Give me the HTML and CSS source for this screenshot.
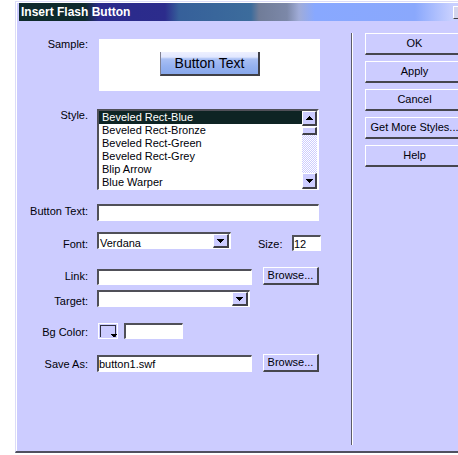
FILE: index.html
```html
<!DOCTYPE html>
<html>
<head>
<meta charset="utf-8">
<title>Insert Flash Button</title>
<link rel="stylesheet" href="styles.css">
</head>
<body>
<div class="dialog">
  <div class="frame">
    <div class="titlebar">
      <span class="title">Insert Flash Button</span>
      <span class="close"></span>
    </div>
    <div class="content">
      <div class="form">
        <div class="row row-sample">
          <span class="lbl">Sample:</span>
          <div class="sample-box"><div class="sample-btn">Button Text</div></div>
        </div>

        <div class="row row-style">
          <span class="lbl">Style.</span>
          <div class="listbox">
            <ul class="items">
              <li class="sel">Beveled Rect-Blue</li>
              <li>Beveled Rect-Bronze</li>
              <li>Beveled Rect-Green</li>
              <li>Beveled Rect-Grey</li>
              <li>Blip Arrow</li>
              <li>Blue Warper</li>
            </ul>
            <div class="vscroll">
              <div class="sb-btn sb-up"><svg width="7" height="4" viewBox="0 0 7 4" shape-rendering="crispEdges"><path d="M3.5 0L7 4H0z" fill="#000"/></svg></div>
              <div class="thumb"></div>
              <div class="track"></div>
              <div class="sb-btn sb-down"><svg width="7" height="4" viewBox="0 0 7 4" shape-rendering="crispEdges"><path d="M0 0H7L3.5 4z" fill="#000"/></svg></div>
            </div>
          </div>
        </div>

        <div class="row row-btntext">
          <span class="lbl">Button Text:</span>
          <div class="field field-wide"></div>
        </div>

        <div class="row row-font">
          <span class="lbl">Font:</span>
          <div class="select select-font">
            <span class="select-text">Verdana</span>
            <span class="drop"><svg width="7" height="4" viewBox="0 0 7 4" shape-rendering="crispEdges"><path d="M0 0H7L3.5 4z" fill="#000"/></svg></span>
          </div>
          <span class="size-lbl">Size:</span>
          <div class="field field-size"><span class="field-text">12</span></div>
        </div>

        <div class="row row-link">
          <span class="lbl">Link:</span>
          <div class="field field-link"></div>
          <div class="btn btn-browse">Browse...</div>
        </div>

        <div class="row row-target">
          <span class="lbl">Target:</span>
          <div class="select select-target">
            <span class="select-text"></span>
            <span class="drop"><svg width="7" height="4" viewBox="0 0 7 4" shape-rendering="crispEdges"><path d="M0 0H7L3.5 4z" fill="#000"/></svg></span>
          </div>
        </div>

        <div class="row row-bg">
          <span class="lbl">Bg Color:</span>
          <span class="swatch">
            <svg width="20" height="16" viewBox="0 0 20 16" shape-rendering="crispEdges">
              <rect x="0" y="0" width="20" height="16" fill="#ccccff"/>
              <rect x="0.5" y="0.5" width="19" height="15" fill="none" stroke="#ffffff"/>
              <path d="M2.5 14V2.5H17.5V14" fill="none" stroke="#303040"/>
              <path d="M12 11H19L15.5 14.5z" fill="#000"/>
            </svg>
          </span>
          <div class="field field-color"></div>
        </div>

        <div class="row row-save">
          <span class="lbl">Save As:</span>
          <div class="field field-save"><span class="field-text">button1.swf</span></div>
          <div class="btn btn-browse">Browse...</div>
        </div>
      </div>

      <div class="sep"></div>

      <div class="buttons">
        <div class="btn btn-side">OK</div>
        <div class="btn btn-side">Apply</div>
        <div class="btn btn-side">Cancel</div>
        <div class="btn btn-side">Get More Styles...</div>
        <div class="btn btn-side">Help</div>
      </div>
    </div>
  </div>
</div>
</body>
</html>
```

FILE: styles.css
```css
html, body {
  margin: 0;
  padding: 0;
  background: #ffffff;
  overflow: hidden;
}

body {
  width: 458px;
  height: 455px;
  font-family: "Liberation Sans", Arial, sans-serif;
  font-size: 11px;
  color: #000008;
}

.dialog {
  margin: 1px 0 0 15px;
  width: 459px;
  border-top: 1px solid #dcdcf8;
  border-left: 1px solid #dcdcf8;
  border-bottom: 2px solid #505060;
  background: #ccccff;
}

.frame {
  border-top: 1px solid #ffffff;
  border-left: 1px solid #ffffff;
  padding: 0 2px;
  height: 448px;
  display: flex;
  flex-direction: column;
}

.titlebar {
  height: 18px;
  flex: none;
  display: flex;
  align-items: center;
  background: linear-gradient(to right,
    #0e2a2c 0px, #0e2a2c 66px,
    #2a2a8c 80px, #2c2c8c 146px,
    #36609a 160px, #3c6c9c 232px,
    #707c98 240px, #7c88a8 268px,
    #a0acd8 280px, #88a8ff 296px,
    #8aa8fc 396px, #c8d0ff 433px, #ccccff 454px);
}

.title {
  padding-left: 2px;
  font-weight: bold;
  font-size: 12px;
  line-height: 18px;
  color: #ffffff;
}

.close {
  margin-left: auto;
  margin-right: 4px;
  width: 16px;
  height: 13px;
  box-sizing: border-box;
  background: #d4d4ec;
  border-top: 1px solid #ffffff;
  border-left: 1px solid #ffffff;
  border-bottom: 1px solid #404048;
}

.content {
  flex: 1;
  display: flex;
}

.form {
  width: 332px;
  flex: none;
  padding-top: 18px;
  box-sizing: border-box;
  display: flex;
  flex-direction: column;
}

.row {
  display: flex;
  align-items: flex-start;
}

.lbl {
  width: 69px;
  flex: none;
  margin-right: 9px;
  text-align: right;
  line-height: 13px;
  white-space: nowrap;
}

/* row spacing */
.row-style { margin-top: 18px; }
.row-btntext { margin-top: 14px; }
.row-font { margin-top: 11px; }
.row-link { margin-top: 16px; }
.row-target { margin-top: 5px; }
.row-bg { margin-top: 15px; }
.row-save { margin-top: 15px; }

/* label vertical offsets */
.row-sample .lbl { margin-top: -1px; }
.row-btntext .lbl { margin-top: 1px; }
.row-font .lbl { margin-top: 6px; }
.row-link .lbl { margin-top: 3px; }
.row-target .lbl { margin-top: 5px; }
.row-bg .lbl { margin-top: 3px; }
.row-save .lbl { margin-top: 4px; }

/* sample */
.sample-box {
  margin-left: 2px;
  width: 221px;
  height: 52px;
  background: #ffffff;
  display: flex;
  align-items: center;
  justify-content: center;
}

.sample-btn {
  width: 100px;
  height: 24px;
  box-sizing: border-box;
  margin-left: 1px;
  margin-top: -2px;
  background: linear-gradient(to bottom, #eef0ff 0px, #e2e8ff 5px, #aac0f4 7px, #96b2f0 14px, #88a8ec 22px);
  border-left: 1px solid #808090;
  border-right: 2px solid #404048;
  border-bottom: 2px solid #404048;
  font-size: 14px;
  line-height: 22px;
  text-align: center;
  color: #000008;
}

/* list */
.listbox {
  width: 222px;
  height: 81px;
  box-sizing: border-box;
  border-style: solid;
  border-width: 2px 2px 1px 2px;
  border-color: #505058 #ffffff #ffffff #505058;
  background: #ffffff;
  display: flex;
}

.items {
  flex: 1;
  list-style: none;
  margin: 0;
  padding: 0;
}

.items li {
  height: 13px;
  line-height: 13px;
  padding-left: 3px;
  white-space: nowrap;
  color: #000008;
}

.items li.sel {
  background: #0e2424;
  color: #ffffff;
}

.vscroll {
  width: 15px;
  flex: none;
  display: flex;
  flex-direction: column;
}

.sb-btn {
  box-sizing: border-box;
  background: #ccccff;
  border-top: 1px solid #ffffff;
  border-left: 1px solid #ffffff;
  border-right: 2px solid #404048;
  border-bottom: 2px solid #404048;
  display: flex;
  align-items: center;
  justify-content: center;
}

.sb-up { height: 15px; }
.sb-down { height: 16px; }

.thumb {
  margin-top: 1px;
  height: 8px;
  box-sizing: border-box;
  background: #ccccff;
  border-top: 1px solid #ffffff;
  border-left: 1px solid #ffffff;
  border-right: 2px solid #404048;
  border-bottom: 2px solid #404048;
}

.track {
  flex: 1;
  background: repeating-conic-gradient(#ffffff 0 25%, #ccccff 0 50%) 0 0 / 2px 2px;
}

/* fields */
.field {
  box-sizing: border-box;
  height: 17px;
  background: #ffffff;
  border-style: solid;
  border-width: 2px 1px 1px 2px;
  border-color: #505058 #ffffff #ffffff #505058;
  overflow: visible;
}

.field-text {
  display: block;
  line-height: 13px;
  padding-top: 1px;
  color: #000008;
  white-space: nowrap;
}

.field-wide { width: 222px; }
.field-link { width: 155px; height: 16px; margin-top: 2px; }
.field-size { width: 29px; height: 16px; margin-top: 3px; }
.field-color { width: 59px; height: 16px; margin-left: 6px; }
.field-save { width: 155px; margin-top: 1px; }

.select {
  box-sizing: border-box;
  height: 17px;
  background: #ffffff;
  border-style: solid;
  border-width: 2px 1px 1px 2px;
  border-color: #505058 #ffffff #ffffff #505058;
  display: flex;
  align-items: flex-start;
}

.select-font { width: 134px; }
.select-target { width: 153px; }

.select-text {
  padding-left: 1px;
  padding-top: 3px;
  line-height: 13px;
  color: #000008;
  white-space: nowrap;
}

.drop {
  margin-left: auto;
  margin-right: 1px;
  width: 16px;
  height: 14px;
  box-sizing: border-box;
  background: #ccccff;
  border-top: 1px solid #ffffff;
  border-left: 1px solid #ffffff;
  border-right: 2px solid #404048;
  border-bottom: 2px solid #404048;
  display: flex;
  align-items: center;
  justify-content: center;
}

.size-lbl {
  margin-left: 27px;
  margin-top: 6px;
  width: 34px;
  line-height: 13px;
}

.swatch {
  margin-left: 1px;
  width: 20px;
  height: 16px;
  display: block;
}

.swatch svg { display: block; }

/* buttons */
.btn {
  box-sizing: border-box;
  background: #ccccff;
  border-top: 1px solid #ffffff;
  border-left: 1px solid #ffffff;
  border-right: 2px solid #46464e;
  border-bottom: 2px solid #46464e;
  text-align: center;
  color: #000008;
  white-space: nowrap;
}

.btn-browse {
  margin-left: 11px;
  width: 56px;
  height: 18px;
  line-height: 15px;
}

.sep {
  width: 1px;
  flex: none;
  margin: 12px 0 6px 0;
  background: #5c5c68;
  border-right: 1px solid #ffffff;
}

.buttons {
  margin-left: 12px;
  padding-top: 12px;
  display: flex;
  flex-direction: column;
  gap: 6px;
}

.btn-side {
  width: 100px;
  height: 22px;
  line-height: 19px;
}
```
